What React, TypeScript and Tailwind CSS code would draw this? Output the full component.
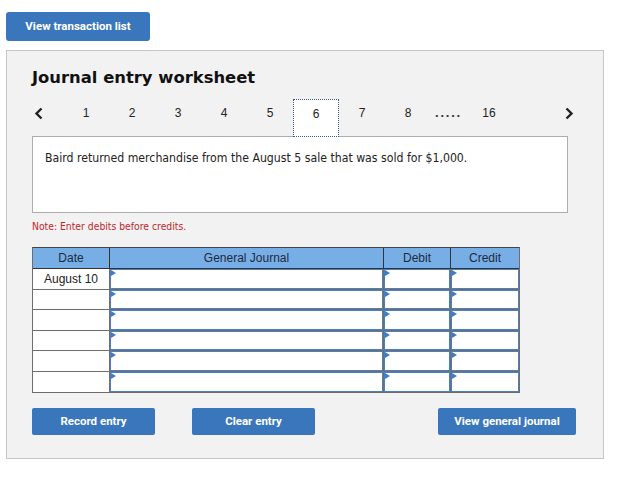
import React from "react";

const pages = ["1", "2", "3", "4", "5", "6", "7", "8"];

function Marker() {
  return (
    <span className="absolute left-0 top-0 w-0 h-0 border-t-[3px] border-b-[3px] border-l-[5px] border-t-transparent border-b-transparent border-l-[#3f7cc4]" />
  );
}

function InputCell({ w }: { w: string }) {
  return (
    <div className={`${w} h-full border-r border-[#6e6e6e] p-0`}>
      <div className="relative h-full border border-[#4b7fc0] bg-white">
        <Marker />
      </div>
    </div>
  );
}

export default function App() {
  const rows = ["August 10", "", "", "", "", ""];
  const cond = { fontFamily: "'DejaVu Sans Condensed', 'DejaVu Sans', sans-serif" };
  return (
    <div className="w-[625px] h-[487px] bg-white overflow-hidden" style={{ fontFamily: "Arial, 'Liberation Sans', sans-serif" }}>
      <div className="pt-[12px] pl-[6px]">
        <button className="w-[144px] h-[29px] rounded-[3px] bg-[#3a76bb] text-white text-[11.5px] font-bold" style={{ fontFamily: "Roboto, sans-serif" }}>
          View transaction list
        </button>
      </div>
      <div className="ml-[6px] mt-[9px] w-[598px] h-[409px] border border-[#c6c6c6] bg-[#f2f2f2] pl-[25px]">
        <div className="pt-[17px] h-[36px] leading-[20px] text-[16.4px] font-bold text-[#111]" style={{ fontFamily: "'DejaVu Sans', Verdana, sans-serif" }}>
          Journal entry worksheet
        </div>
        <div className="mt-[12px] flex h-[38px] w-[544px] text-[12px] text-[#222] relative z-10">
          <div className="w-[31px] pt-[8px] pl-[2px] flex justify-start">
            <svg width="10" height="13" viewBox="0 0 10 13"><path d="M7.5 1.5 L2.5 6.5 L7.5 11.5" fill="none" stroke="#222" strokeWidth="2.4" /></svg>
          </div>
          {pages.map((p) => (
            <div
              key={p}
              className={`w-[46px] h-[38px] pt-[6px] leading-[16px] text-center ${p === "6" ? "bg-white border border-dotted border-[#3b5a8c]" : ""}`}
            >
              {p}
            </div>
          ))}
          <div className="w-[35px] pt-[6px] leading-[16px] text-center font-bold tracking-[1.8px] text-[13px] text-[#333]">.....</div>
          <div className="w-[46px] pt-[6px] leading-[16px] text-center">16</div>
          <div className="ml-auto pt-[8px] pr-[2px]">
            <svg width="10" height="13" viewBox="0 0 10 13"><path d="M2.5 1.5 L7.5 6.5 L2.5 11.5" fill="none" stroke="#222" strokeWidth="2.4" /></svg>
          </div>
        </div>
        <div className="-mt-px w-[536px] h-[77px] border border-[#adadad] bg-white px-[12px] pt-[13px] text-[12.2px] leading-[16px] text-[#222]" style={cond}>
          Baird returned merchandise from the August 5 sale that was sold for $1,000.
        </div>
        <div className="mt-[7px] text-[10.3px] leading-[12px] text-[#c1272d]" style={cond}>
          Note: Enter debits before credits.
        </div>
        <div className="mt-[15px] w-[488px] border border-[#6e6e6e] border-t-[#444]">
          <div className="flex h-[21px] bg-[#78aee6] border-b border-[#333] text-[12px] leading-[20px] text-[#1d2a3d] text-center">
            <div className="w-[77px] border-r border-[#333]">Date</div>
            <div className="w-[274px] border-r border-[#333]">General Journal</div>
            <div className="w-[67px] border-r border-[#333]">Debit</div>
            <div className="w-[68px]">Credit</div>
          </div>
          {rows.map((d, i) => (
            <div key={i} className={`flex h-[20.5px] ${i < rows.length - 1 ? "border-b border-[#6e6e6e]" : ""}`}>
              <div className="w-[77px] h-full border-r border-[#6e6e6e] bg-white text-center text-[12px] leading-[20px] text-[#222]">{d}</div>
              <InputCell w="w-[274px]" />
              <InputCell w="w-[67px]" />
              <div className="w-[68px] h-full">
                <div className="relative h-full border border-[#4b7fc0] bg-white">
                  <Marker />
                </div>
              </div>
            </div>
          ))}
        </div>
        <div className="mt-[15px] flex" style={{ fontFamily: "Roboto, sans-serif" }}>
          <button className="w-[123px] h-[27px] rounded-[2px] bg-[#3a76bb] text-white text-[11.5px] font-bold">Record entry</button>
          <button className="ml-[37px] w-[123px] h-[27px] rounded-[2px] bg-[#3a76bb] text-white text-[11.5px] font-bold">Clear entry</button>
          <button className="ml-[123px] w-[138px] h-[27px] rounded-[2px] bg-[#3a76bb] text-white text-[11.5px] font-bold">View general journal</button>
        </div>
      </div>
    </div>
  );
}
